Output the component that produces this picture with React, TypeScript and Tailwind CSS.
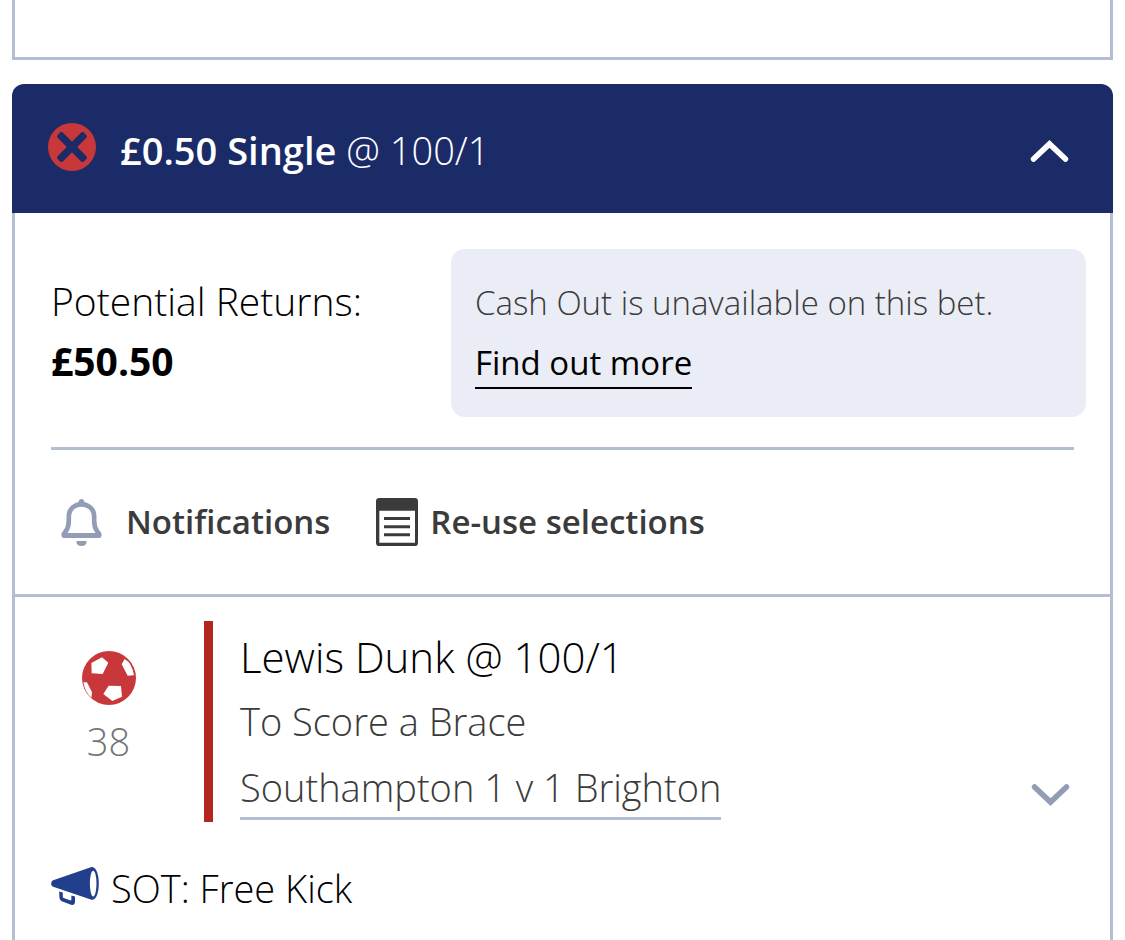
export default function App() {
  return (
    <main className="flex min-h-screen flex-col gap-6 bg-white px-3 font-['Open_Sans','Noto_Sans',sans-serif] font-[340] text-black">
      {/* PREVIOUS BET */}
      <div className="h-[60px] shrink-0 border-x-[3px] border-b-[3px] border-[#b4bed3]" />

      {/* BET */}
      <section className="flex grow flex-col">
        <header className="flex items-center rounded-t-xl bg-[#1b2b68] py-8 pr-11 pl-9 text-white">
          <LostIcon />
          <h2 className="grow pt-1 pl-6 text-[38px] leading-[61px]">
            <strong className="font-semibold">£0.50 Single</strong> @ 100/1
          </h2>
          <button type="button" aria-label="Collapse bet" aria-expanded="true" className="pt-1">
            <Chevron direction="up" />
          </button>
        </header>

        <div className="grow border-x-[3px] border-[#b4bed3]">
          {/* RETURNS */}
          <div className="flex pt-9 pr-6 pl-9">
            <dl className="w-[400px] shrink-0 pt-[22px] text-[39px] leading-[60px]">
              <dt>Potential Returns:</dt>
              <dd className="font-bold">£50.50</dd>
            </dl>

            <div className="grow rounded-[14px] bg-[#eaedf5] px-6 pt-6 pb-7 text-[33px] leading-[60px]">
              <p className="text-[#3b3b3b]">Cash Out is unavailable on this bet.</p>
              <a
                href="#cash-out"
                className="block w-fit border-b-2 border-black pt-1.5 leading-[48px] font-normal"
              >
                Find out more
              </a>
            </div>
          </div>

          {/* ACTIONS */}
          <div className="mx-9 mt-[30px] flex h-[147px] items-center gap-[46px] border-t-[3px] border-[#b4bed3] text-[33px] font-semibold text-[#3b3b3b]">
            <button type="button" className="flex items-center gap-6 pl-[10px]">
              <BellIcon />
              Notifications
            </button>
            <button type="button" className="flex items-center gap-3">
              <SlipIcon />
              Re-use selections
            </button>
          </div>

          {/* SELECTION */}
          <div className="border-t-[3px] border-[#b4bed3] pt-6">
            <div className="flex">
              <div className="flex w-[189px] shrink-0 flex-col items-center gap-3 pt-[30px] pr-0.5 text-[38px] leading-[48px] text-[#757575]">
                <FootballIcon />
                38
              </div>

              <div className="grow border-l-[9px] border-[#b3261e] pt-1 pb-0.5 pl-[27px] text-[38px] leading-[64px] text-[#3b3b3b]">
                <h3 className="text-[42px] leading-[64px] text-black">Lewis Dunk @ 100/1</h3>
                <p>To Score a Brace</p>
                <a
                  href="#match"
                  className="block w-fit border-b-[3px] border-[#b4bed3] pt-1 leading-[60px]"
                >
                  Southampton 1 v 1 Brighton
                </a>
              </div>

              <button
                type="button"
                aria-label="Show match details"
                className="mr-10 mb-4 self-end"
              >
                <Chevron direction="down" />
              </button>
            </div>

            <div className="mt-9 flex items-center gap-3 pl-9 text-[38px] leading-[60px]">
              <MegaphoneIcon />
              <p>SOT: Free Kick</p>
            </div>
          </div>
        </div>
      </section>
    </main>
  );
}

function Chevron({ direction }: { direction: "up" | "down" }) {
  const up = direction === "up";

  return (
    <svg
      viewBox="0 0 117 67"
      className={up ? "h-[22px] w-[39px]" : "h-[22px] w-[39px] text-[#929db5]"}
      fill="none"
      stroke="currentColor"
      strokeWidth="17"
      strokeLinecap="round"
      aria-hidden="true"
    >
      <path d={up ? "M10 58 58.5 12 107 58" : "M10 9 58.5 55 107 9"} />
    </svg>
  );
}

function LostIcon() {
  return (
    <svg viewBox="0 0 144 144" className="mb-1 size-12 shrink-0" aria-hidden="true">
      <circle cx="72" cy="72" r="72" fill="#c8373a" />
      <g fill="#1b2b68">
        <rect x="16" y="61" width="112" height="22" rx="6" transform="rotate(45 72 72)" />
        <rect x="16" y="61" width="112" height="22" rx="6" transform="rotate(-45 72 72)" />
      </g>
    </svg>
  );
}

function BellIcon() {
  return (
    <svg viewBox="0 0 122 141" className="h-[47px] w-[41px]" fill="#929db5" aria-hidden="true">
      <path
        fillRule="evenodd"
        d="M61 0C67 0 69 5 70 9C92 14 106 30 106 52C106 77 107 86 120 101C123 108 121 117 114 117H8C1 117 -1 108 2 101C15 86 16 77 16 52C16 30 30 14 52 9C53 5 55 0 61 0ZM61 23C42 23 30 35 30 53C30 78 29 87 19 102H103C93 87 92 78 92 53C92 35 80 23 61 23Z"
      />
      <path d="M46 126H76V129C76 137 70 141 61 141C52 141 46 137 46 129Z" />
    </svg>
  );
}

function SlipIcon() {
  return (
    <svg viewBox="0 0 126 144" className="h-12 w-[42px]" fill="#3b3b3b" aria-hidden="true">
      <path
        fillRule="evenodd"
        d="M10 0H116Q126 0 126 10V134Q126 144 116 144H10Q0 144 0 134V10Q0 0 10 0ZM10 38V134H117V38Z"
      />
      <path d="M24 57H102V66H24ZM24 82H102V91H24ZM24 106H102V115H24Z" />
    </svg>
  );
}

function FootballIcon() {
  return (
    <svg viewBox="0 0 162 162" className="size-[54px]" aria-hidden="true">
      <circle cx="81" cy="81" r="81" fill="#c8373a" />
      <path
        fill="#fff"
        d="M60 19 79 35 62 69 29 67 28 36ZM128 24Q150 36 156 73L137 74 119 40ZM80 104 117 105 120 137 91 150 64 129ZM4 94H15L30 124 28 140Q9 124 4 94Z"
      />
    </svg>
  );
}

function MegaphoneIcon() {
  return (
    <svg viewBox="0 0 144 115" className="mb-1 h-[38px] w-12 shrink-0" aria-hidden="true">
      <path
        fill="#213f8c"
        d="M122 0C136 -1 144 22 144 50C144 78 136 101 122 99L6 60C-2 56 -2 44 6 40Z"
      />
      <ellipse cx="127" cy="50" rx="10" ry="39" fill="#fff" />
      <path
        fill="#213f8c"
        d="M24 74 35 77V91Q35 93 38 94L57 101Q61 102 61 98V86L72 89V107Q71 117 60 114L32 104Q26 101 25 94Z"
      />
    </svg>
  );
}
